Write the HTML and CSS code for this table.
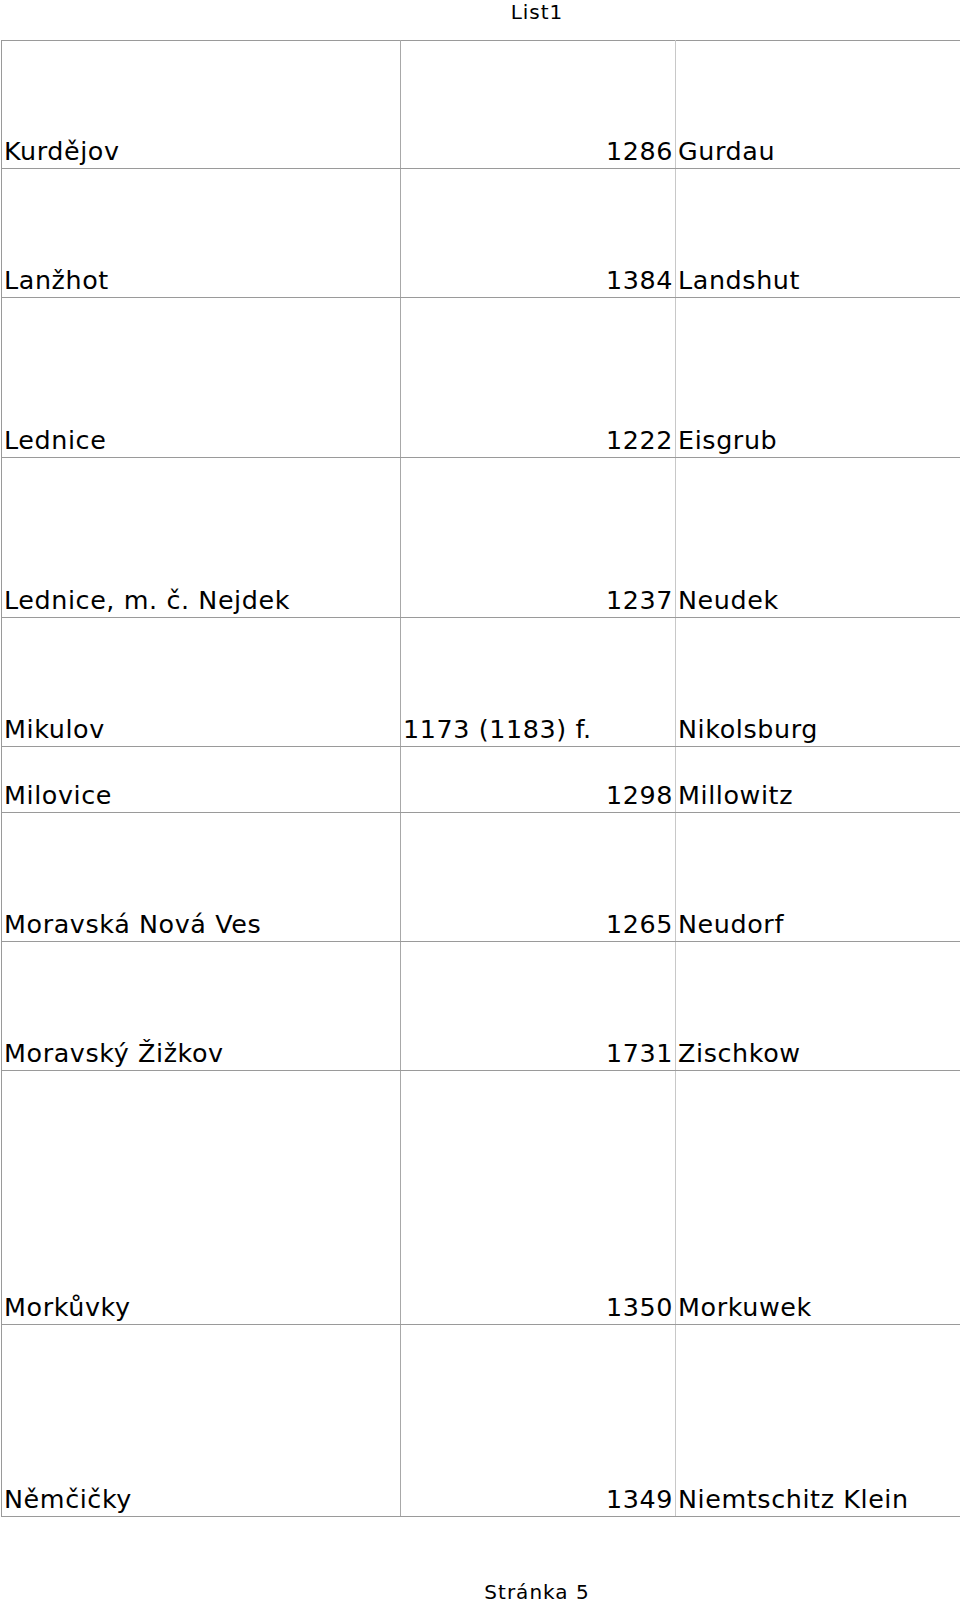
FILE: index.html
```html
<!DOCTYPE html>
<html lang="cs">
<head>
<meta charset="utf-8">
<title>List1</title>
<link rel="stylesheet" href="styles.css">
</head>
<body>
<div class="page">
  <header class="sheet-title">List1</header>
  <table class="sheet">
    <colgroup>
      <col class="c-cz">
      <col class="c-year">
      <col class="c-de">
    </colgroup>
    <tbody>
      <tr class="r128"><td class="cz">Kurdějov</td><td class="num">1286</td><td class="de">Gurdau</td></tr>
      <tr class="r129"><td class="cz">Lanžhot</td><td class="num">1384</td><td class="de">Landshut</td></tr>
      <tr class="r160"><td class="cz">Lednice</td><td class="num">1222</td><td class="de">Eisgrub</td></tr>
      <tr class="r160"><td class="cz">Lednice, m. č. Nejdek</td><td class="num">1237</td><td class="de">Neudek</td></tr>
      <tr class="r129"><td class="cz">Mikulov</td><td class="txt">1173 (1183) f.</td><td class="de">Nikolsburg</td></tr>
      <tr class="r66"><td class="cz">Milovice</td><td class="num">1298</td><td class="de">Millowitz</td></tr>
      <tr class="r129"><td class="cz">Moravská Nová Ves</td><td class="num">1265</td><td class="de">Neudorf</td></tr>
      <tr class="r129"><td class="cz">Moravský Žižkov</td><td class="num">1731</td><td class="de">Zischkow</td></tr>
      <tr class="r254"><td class="cz">Morkůvky</td><td class="num">1350</td><td class="de">Morkuwek</td></tr>
      <tr class="r192"><td class="cz">Němčičky</td><td class="num">1349</td><td class="de">Niemtschitz Klein</td></tr>
    </tbody>
  </table>
  <footer class="sheet-footer">Stránka 5</footer>
</div>
</body>
</html>
```

FILE: styles.css
```css
html, body {
  margin: 0;
  padding: 0;
  background: #ffffff;
}

body {
  font-family: "DejaVu Sans", "Liberation Sans", sans-serif;
  color: #000000;
  overflow: hidden;
}

.page {
  width: 960px;
  height: 1604px;
  overflow: hidden;
}

.sheet-title,
.sheet-footer {
  font-size: 20px;
  letter-spacing: 1px;
  line-height: 24px;
  text-align: center;
  padding-left: 114px;
}

.sheet-title {
  height: 40px;
}

.sheet-footer {
  margin-top: 63px;
  height: 24px;
}

.sheet {
  margin-left: 1px;
  width: 959px;
  border-collapse: collapse;
  table-layout: fixed;
  font-size: 25.4px;
  letter-spacing: 0.6px;
  line-height: 28px;
}

.c-cz { width: 399px; }
.c-year { width: 275px; }
.c-de { width: 285px; }

.sheet td {
  vertical-align: bottom;
  padding: 0 2px 3px 2px;
  white-space: nowrap;
  overflow: hidden;
  border-top: 1px solid #9a9a9a;
  border-bottom: 1px solid #9a9a9a;
}

.sheet td.cz {
  border-left: 1px solid #9a9a9a;
  border-right: 1px solid #a8a8a8;
}

.sheet td.num,
.sheet td.txt {
  border-right: 1px solid #c8c8c8;
}

.sheet td.num {
  text-align: right;
}

.sheet td.txt,
.sheet td.de {
  text-align: left;
}

.r128 { height: 128px; }
.r129 { height: 129px; }
.r160 { height: 160px; }
.r66 { height: 66px; }
.r254 { height: 254px; }
.r192 { height: 192px; }
```
